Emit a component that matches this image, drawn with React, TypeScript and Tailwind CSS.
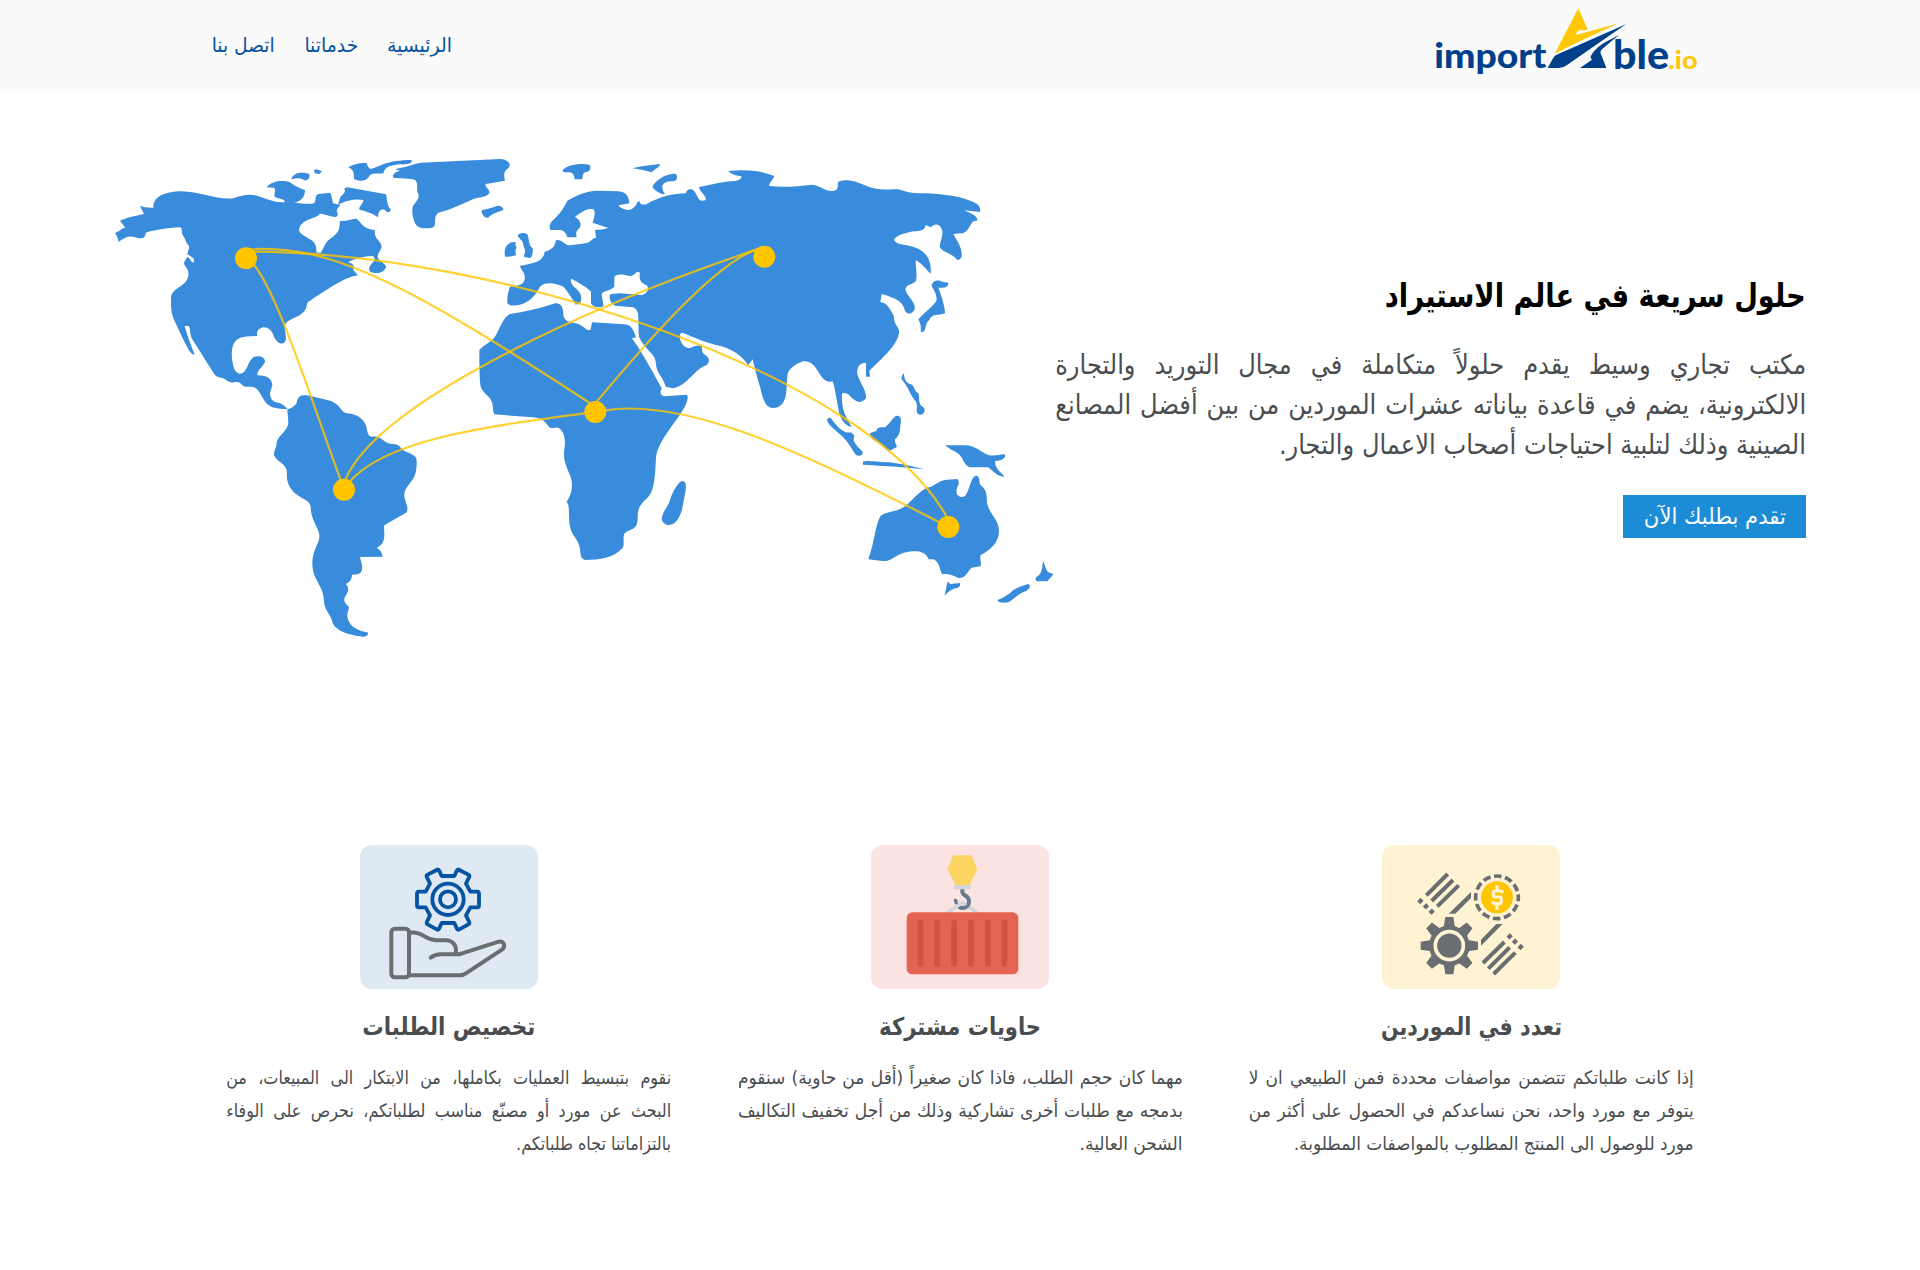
import { useLayoutEffect, useRef } from "react";

/**
 * Sets lines of text to an exact measure. The last line fixes the horizontal
 * scale of the glyphs, the lines above it are justified through word spacing.
 */
function FitText({
  lines,
  width,
  last,
  className,
}: {
  lines: string[];
  width: number;
  last: number;
  className: string;
}) {
  const box = useRef<HTMLSpanElement>(null);
  useLayoutEffect(() => {
    const spans = Array.from(box.current!.children) as HTMLElement[];
    spans.forEach((s) => {
      s.style.transform = "none";
      s.style.wordSpacing = "0px";
    });
    const natural = spans.map((s) => s.getBoundingClientRect().width);
    const scale = last / natural[natural.length - 1];
    spans.forEach((s, i) => {
      if (i < spans.length - 1) {
        const gaps = lines[i].split(" ").length - 1;
        s.style.wordSpacing = `${(width / scale - natural[i]) / gaps}px`;
      }
      s.style.transform = `scaleX(${scale})`;
    });
  }, [lines, width, last]);
  return (
    <span ref={box} className={`flex flex-col items-start ${className}`} style={{ width }}>
      {lines.map((l) => (
        <span key={l} className="block w-max origin-right whitespace-nowrap">
          {l}
        </span>
      ))}
    </span>
  );
}

function Logo() {
  return (
    <svg viewBox="0 0 930 267" className="h-[89px] w-[310px]" direction="ltr">
      <g fill="#003f8a" className="font-['Lato'] font-black">
        <text x="73" y="205" fontSize="104" textLength="336" lengthAdjust="spacingAndGlyphs">import</text>
        <text x="609" y="207" fontSize="122" textLength="168" lengthAdjust="spacingAndGlyphs">ble</text>
      </g>
      <text x="775" y="208" fontSize="76" className="font-['Lato'] font-black" fill="#ffc708" textLength="88" lengthAdjust="spacingAndGlyphs">.io</text>
      <path fill="#ffc708" d="M505 25 L534 91 L513 90 Q500 90 498 105 L626 70 Q520 118 434 161 Z" />
      <path fill="#003f8a" d="M413 204 L430 173 Q434 166 445 162 L649 72 Q560 133 470 196 Q460 204 446 204 Z" />
      <path fill="#003f8a" d="M628 104 Q600 126 576 148 Q568 156 574 165 L589 204 L510 204 L546 179 L541 172 Q550 150 580 130 Z" />
    </svg>
  );
}

const dots: [number, number][] = [
  [438, 355],
  [732, 1049],
  [1486, 816],
  [1993, 350],
  [2545, 1161],
];

const routes = [
  "M450 360 C530 440 640 800 722 1020",
  "M450 335 C1200 335 2300 700 2540 1130",
  "M450 328 C700 310 950 450 1486 800",
  "M737 1017 C830 800 1400 520 1980 325",
  "M745 1030 C850 900 1150 860 1470 818",
  "M1490 785 C1620 630 1850 360 1980 325",
  "M1510 812 C1750 770 2100 930 2540 1158",
];

function WorldMap() {
  return (
    <svg viewBox="0 0 2865 1530" className="h-[510px] w-[955px] shrink-0">
      <g fill="#398cdc">
        <path d="M45 280 L75 262 L60 242 Q80 232 132 222 L120 198 Q135 204 160 203 C160 165 200 155 245 154 C300 155 350 180 400 175 C430 165 450 160 480 170 C510 180 530 188 553 187 L585 188 C605 190 640 196 645 186 C648 175 645 165 655 162 L690 158 C697 170 697 185 700 190 L722 195 C715 203 705 208 714 222 C712 232 705 232 700 230 C685 228 670 220 660 221 C650 235 620 235 605 252 C595 265 595 275 605 282 C620 295 645 300 648 320 L650 338 L662 338 C672 325 675 305 690 297 C705 285 718 275 718 260 L720 243 C740 245 755 235 768 236 C785 245 785 266 825 270 C820 300 845 300 845 322 C840 335 833 340 833 350 C835 365 860 370 858 382 C850 402 825 402 810 395 C802 380 815 372 822 362 C826 350 820 348 815 348 C790 350 755 358 745 367 C765 372 760 380 760 390 L774 406 C735 410 680 450 623 487 C618 500 622 510 600 525 C580 535 565 540 556 552 C550 570 565 595 553 608 C540 615 530 605 522 590 C515 570 505 562 490 562 C475 565 468 575 472 588 C440 590 420 588 405 605 C390 625 395 660 402 685 C410 705 425 705 435 692 C445 680 445 665 460 652 C475 645 495 650 495 665 C490 680 470 690 472 706 C500 706 515 715 517 735 C515 745 510 755 510 765 C515 785 525 786 535 788 C550 792 555 800 564 808 L540 806 C522 805 510 800 502 793 C485 775 480 750 465 743 C450 738 440 743 430 738 C420 730 422 726 405 726 C388 732 380 720 370 715 C358 710 352 712 344 704 L275 595 C268 575 272 560 265 558 L254 558 C262 590 275 620 284 644 C270 645 260 620 220 535 Q212 515 213 490 L213 470 C220 440 262 440 265 405 C268 385 252 380 252 368 L262 350 C275 360 272 365 280 368 C285 362 285 355 262 343 C265 330 270 320 265 315 C255 305 255 290 249 288 C243 275 248 262 240 262 C200 264 165 270 137 278 C137 295 125 297 110 293 C90 285 75 290 55 306 C55 295 52 290 45 280 Z" />
        <path d="M500 142 C515 122 550 120 570 127 C585 140 600 145 615 150 C615 175 600 185 580 189 L555 188 C555 178 540 176 525 172 C520 160 530 150 522 143 Z" />
        <path d="M718 180 C722 160 740 165 733 145 L742 142 L858 163 C862 170 858 195 872 208 C872 218 862 220 855 210 C840 205 835 215 834 232 C815 218 790 213 777 208 C780 195 790 190 790 180 C770 175 735 182 718 193 C712 190 718 185 718 180Z" />
        <path d="M574 118 C580 95 610 95 628 102 C632 115 620 125 612 120 C600 112 590 115 574 118Z" />
        <path d="M642 90 l8 -2 l16 6 l-8 8 l-14 -2z" />
        <path d="M745 82 C765 70 790 68 800 70 C803 78 805 85 812 87 C840 80 860 60 935 60 C938 70 925 74 900 73 C870 76 855 80 850 100 C835 102 815 98 808 108 C800 125 775 125 763 118 C760 100 765 92 745 82Z" />
        <g transform="translate(900 0)">
          <path d="M-15 88 L0 84 C20 80 40 72 62 68 L300 57 C325 58 335 72 325 85 C312 92 310 105 315 122 L257 132 C255 145 270 145 268 160 C255 175 240 170 220 177 C180 195 150 210 115 218 C95 235 115 255 97 263 C75 266 55 268 45 250 C35 225 33 200 45 190 C55 175 60 170 52 155 C50 140 55 130 45 120 C30 113 0 117 -20 113 C-25 100 -10 95 0 92Z" />
          <path d="M245 210 C260 208 285 200 292 197 C305 197 312 205 310 210 C295 217 275 220 265 233 C250 235 245 220 245 210Z" />
          <path d="M353 285 C360 277 378 277 383 284 C388 300 385 315 398 325 C400 340 395 355 388 354 L372 350 C372 340 380 335 370 318 C372 300 355 298 353 285Z" />
          <path d="M315 350 C310 320 325 305 347 306 L346 316 L350 322 L346 332 L348 346 C335 350 325 350 315 350Z" />
          <path d="M488 90 C500 75 540 68 568 74 C575 85 570 95 555 97 C545 102 550 118 545 118 L524 118 C522 105 520 97 505 97 C490 98 488 95 488 90Z" />
          <path d="M698 85 C730 76 760 75 779 72 C783 80 765 85 755 97 C740 92 725 90 698 85Z" />
          <path d="M757 140 C770 115 810 98 828 102 C835 115 830 125 815 124 C785 125 780 140 795 163 C785 162 765 155 757 140Z" />
          <path d="M322 490 C320 470 325 455 330 440 C355 438 370 435 374 418 C378 400 362 390 360 378 C390 370 430 370 434 335 C465 328 465 310 468 300 C490 298 495 318 510 316 C540 312 560 310 568 306 C578 295 583 294 588 293 L585 270 C600 270 615 268 625 264 L578 248 C582 235 588 215 580 208 C565 203 545 215 525 230 C540 240 545 250 540 262 C535 270 525 272 530 292 L502 292 C498 278 490 270 478 270 L452 270 C445 262 450 248 462 238 C490 210 495 195 502 182 C540 160 570 152 590 152 L655 154 C680 155 688 175 688 190 L655 196 C665 210 690 215 700 203 C712 195 710 185 717 182 C720 195 730 195 740 192 C780 170 820 160 858 160 C860 150 865 146 875 148 C885 152 890 165 895 175 C900 185 910 183 917 180 C920 165 900 160 897 141 L960 128 L960 617 C920 610 880 590 846 578 C840 580 838 585 840 598 C848 620 860 627 872 623 C890 615 900 615 906 620 C905 640 910 640 920 648 C928 655 930 665 920 675 C880 690 865 735 820 745 L797 740 C790 710 768 700 767 665 C765 640 735 630 717 590 C715 570 716 540 714 520 C710 505 700 500 690 501 L645 497 C630 490 625 470 632 462 L660 460 L725 465 C745 460 748 445 740 436 C725 430 715 420 720 398 L712 395 C700 405 695 410 685 407 C665 402 645 402 643 412 L643 440 C630 455 605 450 605 465 L611 497 C600 504 580 504 573 490 L573 455 C560 440 530 425 514 416 C510 425 515 435 525 443 C540 455 550 470 540 490 L527 494 C520 480 500 450 490 440 C465 428 435 425 420 440 C400 480 370 500 330 496 Z" />
        </g>
        <g transform="translate(1740 0)">
          <path d="M110 130 L150 124 C175 123 185 118 184 108 C165 108 150 100 145 93 C190 88 240 90 283 108 C280 120 265 130 268 138 C310 142 350 140 395 134 C420 135 435 155 460 153 C480 148 470 135 475 125 C510 112 540 130 560 138 C600 155 630 145 655 148 C690 160 700 160 740 160 C800 162 870 175 895 195 C902 205 901 212 900 216 L852 211 C870 220 890 225 893 240 C885 245 880 240 875 250 C860 275 855 282 840 280 L820 282 C830 300 848 325 845 350 C838 362 832 362 827 355 C815 340 785 335 779 320 C780 300 795 280 782 262 C775 252 765 250 752 262 L737 255 C735 270 725 273 700 274 C670 280 645 288 642 300 C650 315 670 312 690 318 C740 330 755 360 752 401 C740 390 725 370 707 360 C707 380 712 405 708 422 C700 435 680 430 676 447 C680 470 708 485 704 508 C695 525 682 523 675 512 C668 485 650 475 605 462 L601 487 C620 485 635 515 642 530 C640 555 660 560 657 580 C650 620 600 660 568 693 L570 710 L558 710 L558 668 C540 668 530 680 532 702 C540 730 560 750 558 775 C545 790 530 792 505 763 C495 757 485 757 486 765 C485 800 490 820 515 860 C500 860 478 840 474 800 C468 770 465 745 458 724 C435 730 425 710 415 695 C400 670 385 660 365 665 C340 675 322 690 322 710 C318 750 325 800 280 804 C255 802 250 780 240 740 C232 715 225 690 218 658 L205 675 C190 655 170 630 110 614 Z" />
          <path d="M755 435 C760 420 775 418 790 426 L805 428 C805 440 795 445 775 443 C785 470 795 500 795 520 C775 528 755 520 748 540 C735 550 740 565 730 576 L722 575 C725 555 718 545 715 538 C735 515 765 495 770 480 C770 455 755 445 755 435Z" />
          <path d="M672 700 C665 705 662 715 668 722 C685 740 690 765 708 785 C715 800 705 815 715 823 C730 828 738 812 732 803 C715 795 718 780 716 760 C700 755 705 735 692 733 C678 730 672 715 672 700Z" />
        </g>
        <g transform="translate(2040 600)">
          <path d="M141 240 C145 230 152 232 157 240 C175 265 195 282 213 277 L224 287 C215 300 225 312 248 335 C250 347 238 350 228 345 C210 320 205 305 180 283 C160 265 145 255 141 240Z" />
          <path d="M249 365 C262 360 280 365 330 367 L380 375 L433 388 L350 380 L249 374Z" />
          <path d="M270 280 L290 272 C290 262 300 262 315 262 C330 250 340 230 350 227 C362 226 363 235 363 245 C358 265 365 280 345 298 C343 310 352 315 350 322 L327 333 C315 330 310 310 285 302 C275 297 270 290 270 280Z" />
          <path d="M495 316 L550 316 C590 315 605 340 625 345 C645 350 660 342 673 343 C680 350 672 362 645 364 C645 385 660 395 674 410 C655 410 645 400 625 382 L570 382 C545 372 555 345 515 330 Z" />
          <path d="M265 658 C285 600 285 560 300 530 C320 510 350 520 380 495 C400 475 425 450 440 443 C465 440 475 420 500 419 L532 417 C545 435 525 440 530 460 C535 472 545 473 555 468 C570 450 572 410 588 407 C602 408 595 425 602 435 C618 450 620 455 621 490 C630 525 658 540 657 575 C655 610 630 630 602 645 C598 655 605 665 602 678 C590 682 575 680 570 688 C555 710 550 715 535 714 C515 705 505 700 487 703 C478 690 480 665 460 658 L446 658 C438 635 415 632 395 634 C340 640 340 670 300 662Z" />
          <path d="M502 725 L512 732 L540 729 C543 738 535 745 525 745 C510 750 502 758 494 767Z" />
          <path d="M789 663 C795 672 797 690 805 697 L820 702 C815 712 808 715 802 724 L770 724 C762 712 772 710 780 702 C788 690 787 675 789 663Z" />
          <path d="M652 780 C670 775 690 760 700 750 C715 740 735 735 745 732 C753 738 750 745 740 752 C715 760 705 775 685 787 C665 790 655 788 652 780Z" />
        </g>
        <path transform="translate(300 660)" d="M262 148 C270 145 290 140 292 120 C298 105 305 105 320 106 C350 112 370 118 390 122 C425 135 420 155 440 160 C475 162 495 180 500 205 C503 225 508 230 515 230 C545 225 550 250 575 252 C600 250 600 265 612 272 C640 285 650 285 650 305 C652 370 615 370 613 405 C612 420 628 440 620 457 C600 470 570 485 552 497 C552 520 560 550 530 563 C540 570 545 575 548 590 L480 591 C482 605 490 615 485 632 C480 645 465 643 456 644 C455 660 450 665 437 672 C450 685 445 695 435 710 C428 725 440 735 447 740 C445 755 440 760 443 775 C450 800 470 812 505 818 C503 830 492 832 480 829 C450 825 410 815 398 790 C395 765 375 755 372 725 C370 695 365 690 350 660 C335 635 335 605 340 585 C345 560 360 545 358 525 C355 500 332 480 332 440 C328 420 310 420 285 400 C255 370 262 350 260 330 C255 310 230 305 222 285 C220 275 230 265 230 245 C238 225 260 215 265 190 Z" />
        <g transform="translate(1080 420)">
          <path d="M58 210 C70 195 95 185 105 170 C120 145 130 110 150 102 C200 95 240 85 285 70 C300 68 310 78 310 105 C315 130 335 125 355 132 C375 140 380 155 392 149 L396 127 L490 133 C515 133 520 150 528 172 L516 175 C545 215 575 270 605 325 C600 340 600 345 612 349 L680 344 C688 350 680 370 670 388 C645 430 590 490 588 535 C585 580 585 630 565 650 C535 680 533 685 533 720 C530 755 505 745 492 763 C488 780 495 795 487 805 C460 835 420 840 375 840 C350 830 375 810 340 765 C322 735 330 705 325 675 L320 665 C335 640 340 620 332 590 C305 530 312 525 315 490 C315 465 305 440 285 443 C275 445 270 445 265 438 C250 420 245 415 220 412 L103 403 C98 395 100 385 97 370 C90 345 65 340 61 315 C58 280 58 240 58 210Z" />
          <path d="M605 715 C610 690 625 680 630 660 C640 630 655 605 668 603 C680 605 678 620 677 630 C670 665 668 690 660 705 C650 730 635 737 620 734 C608 730 605 722 605 715Z" />
        </g>
      </g>
      <g fill="none" stroke="#ffc600" strokeOpacity=".8" strokeWidth="6.6">
        {routes.map((d) => (
          <path key={d} d={d} />
        ))}
      </g>
      <g fill="#ffc600">
        {dots.map(([x, y]) => (
          <circle key={x} cx={x} cy={y} r="33" />
        ))}
      </g>
    </svg>
  );
}

function SuppliersIcon() {
  return (
    <svg viewBox="36 45 534 432" className="h-full w-full">
      <g stroke="#6b6e70" strokeWidth="12" fill="none">
        <path d="M169 196 L233 132 M185 213 L249 150 M202 229 L266 166" />
        <path d="M146 218 l10 -10 M163 234 l10 -10 M180 250 l10 -10" strokeWidth="13" />
        <path d="M339 399 L403 336 M355 416 L419 352 M371 432 L436 368" />
        <path d="M414 324 l10 -10 M430 340 l10 -10 M447 356 l10 -10" strokeWidth="13" />
        <circle cx="381" cy="202" r="64" strokeWidth="11" strokeDasharray="23 10.5" strokeDashoffset="11" />
      </g>
      <path fill="#6b6e70" d="M236 251 L303 186 L303 204 L256 251 Z M333 347 L333 329 L379 282 L398 282 Z" />
      <circle cx="381" cy="202" r="48" fill="#ffc600" />
      <path d="M396 190 V187 Q396 183 391 183 H376 Q370 183 370 189 V195 Q370 201 376 201 H388 Q394 201 394 207 V215 Q394 221 388 221 H374 Q369 221 369 216 V213 M381 165 V184 M381 220 V240" fill="none" stroke="#fff3d4" strokeWidth="9.5" />
      <g fill="#6b6e70">
        {[0, 45, 90, 135, 180, 225, 270, 315].map((a) => (
          <path key={a} transform={`rotate(${a} 238 347)`} d="M221 292 L226 261 H250 L255 292 Z" />
        ))}
        <circle cx="238" cy="347" r="61" />
      </g>
      <circle cx="238" cy="347" r="42" fill="#6b6e70" stroke="#fff3d4" strokeWidth="11" />
    </svg>
  );
}

function ContainerIcon() {
  return (
    <svg viewBox="33 45 534 432" className="h-full w-full">
      <path d="M260 249 L307 218 L354 249" fill="none" stroke="#d5d6db" strokeWidth="11" />
      <path d="M307 176 V187 Q309 193 318 198 Q328 205 327 215 A19 19 0 0 1 307 234 Q301 234 296 230" fill="none" stroke="#657c8e" strokeWidth="12" />
      <path d="M281 207 Q287 204 293 210 V222 Q288 225 284 221 Z" fill="#657c8e" />
      <path d="M290 228 L307 212 L322 223 L315 227 L307 224 L296 232Z" fill="#d5d6db" />
      <path d="M280 76 H335 L352 118 L328 166 H287 L263 118 Z" fill="#fcd462" />
      <rect x="282" y="165" width="50" height="13" fill="#d5d6db" />
      <rect x="140" y="247" width="335" height="186" rx="17" fill="#e56353" />
      <g fill="#d15241">
        {[173, 223, 274, 324, 375, 425].map((x) => (
          <rect key={x} x={x} y="269" width="17" height="141" rx="8" />
        ))}
      </g>
    </svg>
  );
}

function CustomIcon() {
  return (
    <svg viewBox="30 45 534 432" className="h-full w-full" fill="none" strokeLinejoin="round" strokeLinecap="round">
      <g stroke="#0653a1" strokeWidth="11.5">
        <path d="M275 138 H313 L321 121 Q324 117 328 120 L355 134 Q360 137 357 142 L348 161 L361 185 H382 Q387 185 387 191 V226 Q387 232 382 232 H361 L348 256 L357 275 Q360 280 355 283 L328 298 Q324 301 321 296 L313 279 H275 L267 296 Q264 301 260 298 L233 283 Q228 280 231 275 L240 256 L227 232 H206 Q201 232 201 226 V191 Q201 185 206 185 H227 L240 161 L231 142 Q228 137 233 134 L260 120 Q264 117 267 121 Z" />
        <circle cx="294" cy="208" r="47" />
        <circle cx="294" cy="208" r="24" />
      </g>
      <g stroke="#6b6e70" strokeWidth="12">
        <rect x="124" y="296" width="53" height="146" rx="11" />
        <path d="M180 308 C225 305 220 330 260 331 H285 C310 330 323 350 316 370" />
        <path d="M242 383 Q256 373 272 373 H327 L446 335 C461 332 468 349 457 358 L352 427 Q340 436 330 436 H180" />
      </g>
    </svg>
  );
}

const cards = [
  {
    title: "تعدد في الموردين",
    titleWidth: 181,
    box: "bg-[#fff3d4]",
    icon: <SuppliersIcon />,
    last: 400,
    lines: [
      "إذا كانت طلباتكم تتضمن مواصفات محددة فمن الطبيعي ان لا",
      "يتوفر مع مورد واحد، نحن نساعدكم في الحصول على أكثر من",
      "مورد للوصول الى المنتج المطلوب بالمواصفات المطلوبة.",
    ],
  },
  {
    title: "حاويات مشتركة",
    titleWidth: 162,
    box: "bg-[#fae3e1]",
    icon: <ContainerIcon />,
    last: 103,
    lines: [
      "مهما كان حجم الطلب، فاذا كان صغيراً (أقل من حاوية) سنقوم",
      "بدمجه مع طلبات أخرى تشاركية وذلك من أجل تخفيف التكاليف",
      "الشحن العالية.",
    ],
  },
  {
    title: "تخصيص الطلبات",
    titleWidth: 173,
    box: "bg-[#dfe9f3]",
    icon: <CustomIcon />,
    last: 155,
    lines: [
      "نقوم بتبسيط العمليات بكاملها، من الابتكار الى المبيعات، من",
      "البحث عن مورد أو مصنّع مناسب لطلباتكم، نحرص على الوفاء",
      "بالتزاماتنا تجاه طلباتكم.",
    ],
  },
];

const nav = [
  { label: "الرئيسية", width: 65 },
  { label: "خدماتنا", width: 54 },
  { label: "اتصل بنا", width: 63 },
];

const heroLines = [
  "مكتب تجاري وسيط يقدم حلولاً متكاملة في مجال التوريد والتجارة",
  "الالكترونية، يضم في قاعدة بياناته عشرات الموردين من بين أفضل المصانع",
  "الصينية وذلك لتلبية احتياجات أصحاب الاعمال والتجار.",
];

export default function App() {
  return (
    <div dir="rtl" className="h-[1270px] w-[1920px] overflow-hidden bg-white font-['DejaVu_Sans',sans-serif] text-[#4a4d4f]">
      <header className="flex h-[89px] items-center justify-between bg-[#fafafa] pr-[200px] pl-[212px]">
        <Logo />
        <nav className="flex gap-[29px] text-[#0653a1]">
          {nav.map((n) => (
            <a key={n.label} href="#">
              <FitText lines={[n.label]} width={n.width} last={n.width} className="text-[20px] leading-[28px]" />
            </a>
          ))}
        </nav>
      </header>

      <main>
        <section className="flex h-[740px] items-start justify-between pr-[114px] pl-[100px]">
          <div className="w-[751px] pt-[183px]">
            <h1 className="font-bold text-black">
              <FitText lines={["حلول سريعة في عالم الاستيراد"]} width={421} last={421} className="text-[33px] leading-[48px]" />
            </h1>
            <p className="mt-[25px]">
              <FitText lines={heroLines} width={751} last={527} className="text-[27px] leading-[40px]" />
            </p>
            <a href="#" className="mt-[30px] flex h-[43px] w-[183px] items-center justify-center bg-[#1c8cd6] text-white">
              <FitText lines={["تقدم بطلبك الآن"]} width={142} last={142} className="text-[22px] leading-[30px]" />
            </a>
          </div>
          <div className="pt-[51px]">
            <WorldMap />
          </div>
        </section>

        <section className="mx-auto grid w-[1533px] grid-cols-3 pt-4">
          {cards.map((c) => (
            <article key={c.title} className="flex flex-col items-center px-[33px]">
              <div className={`h-[144px] w-[178px] overflow-hidden rounded-xl ${c.box}`}>{c.icon}</div>
              <h2 className="mt-[18px] font-bold">
                <FitText lines={[c.title]} width={c.titleWidth} last={c.titleWidth} className="text-[24.5px] leading-[40px]" />
              </h2>
              <p className="mt-[14px]">
                <FitText lines={c.lines} width={445} last={c.last} className="text-[18.5px] leading-[33px]" />
              </p>
            </article>
          ))}
        </section>
      </main>
    </div>
  );
}
